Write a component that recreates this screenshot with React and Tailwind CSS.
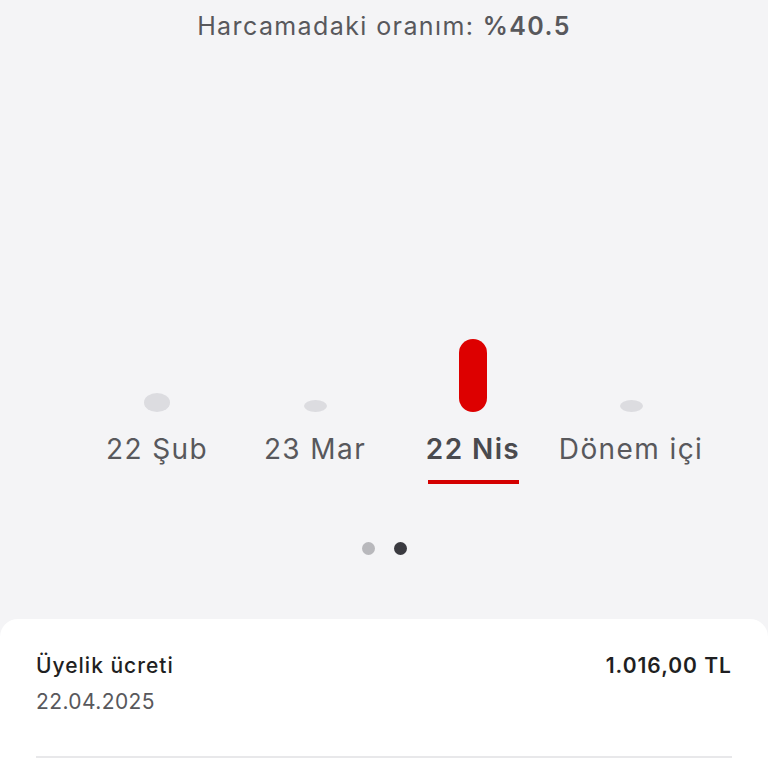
import React from 'react';

const columns = [
  { label: '22 Şub', bar: 'w-[26px] h-[19px] rounded-[50%] bg-[#dcdce0]' },
  { label: '23 Mar', bar: 'w-[23px] h-[12px] rounded-[50%] bg-[#dcdce0]' },
  { label: '22 Nis', bar: 'w-[28px] h-[73px] rounded-full bg-[#dd0000]', active: true },
  { label: 'Dönem içi', bar: 'w-[23px] h-[12px] rounded-[50%] bg-[#dcdce0]' },
];

export default function App() {
  return (
    <div className="w-[768px] h-[768px] overflow-hidden bg-[#f4f4f6] flex flex-col" style={{ fontFamily: 'Inter, "Noto Sans", sans-serif' }}>
      <div className="h-[56px] flex items-center justify-center pb-[2px] text-[25px] text-[#58585c] tracking-[1.4px]">
        Harcamadaki oranım:&nbsp;<span className="font-semibold">%40.5</span>
      </div>

      <div className="pl-[78px] pt-[283px] flex">
        {columns.map(c => (
          <div key={c.label} className="w-[158px] flex flex-col items-center">
            <div className="h-[73px] flex items-end">
              <div className={c.bar} />
            </div>
            <div className={`mt-[20px] text-[28px] leading-[34px] tracking-[1.4px] ${c.active ? 'font-semibold text-[#4a4a4e]' : 'text-[#58585c]'}`}>
              {c.label}
            </div>
            {c.active
              ? <div className="mt-[14px] w-[91px] h-[4px] bg-[#d40000]" />
              : <div className="mt-[14px] h-[4px]" />}
          </div>
        ))}
      </div>

      <div className="mt-[58px] flex justify-center gap-[19px]">
        <div className="w-[13px] h-[13px] rounded-full bg-[#b8b8bc]" />
        <div className="w-[13px] h-[13px] rounded-full bg-[#3a3a40]" />
      </div>

      <div className="mt-[64px] flex-1 bg-white rounded-t-[18px] px-[36px] pt-[33px]">
        <div className="flex justify-between items-start">
          <div className="text-[21px] font-medium text-[#1f1f22] leading-[28px] tracking-[1px]">Üyelik ücreti</div>
          <div className="text-[21px] font-semibold text-[#1f1f22] leading-[28px] tracking-[1px]">1.016,00 TL</div>
        </div>
        <div className="mt-[8px] text-[21px] text-[#58585c] leading-[28px] tracking-[0.4px]">22.04.2025</div>
        <div className="mt-[40px] h-[2px] bg-[#e8e8ea]" />
      </div>
    </div>
  );
}
